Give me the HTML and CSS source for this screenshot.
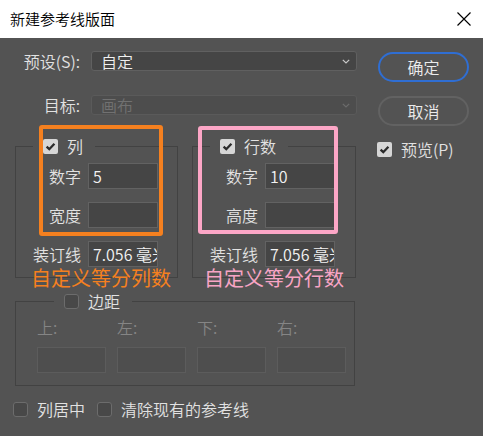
FILE: index.html
```html
<!DOCTYPE html>
<html lang="zh">
<head>
<meta charset="utf-8">
<title>新建参考线版面</title>
<link rel="stylesheet" href="styles.css">
</head>
<body>
<div class="dialog">
  <div class="titlebar">
    <span class="title">新建参考线版面</span>
    <svg class="close" viewBox="0 0 14 14" aria-hidden="true"><path d="M0.5 0.5 L13.5 13.5 M13.5 0.5 L0.5 13.5" stroke="#000" stroke-width="1.15" fill="none"/></svg>
  </div>
  <div class="content">
    <div class="main">
      <div class="field-row">
        <span class="row-label">预设(S):</span>
        <div class="select"><span>自定</span><svg class="chev" viewBox="0 0 8 5"><path d="M0.8 0.8 L4 4 L7.2 0.8" stroke="#c9c9c9" stroke-width="1.2" fill="none"/></svg></div>
      </div>
      <div class="field-row">
        <span class="row-label">目标:</span>
        <div class="select disabled"><span>画布</span><svg class="chev" viewBox="0 0 8 5"><path d="M0.8 0.8 L4 4 L7.2 0.8" stroke="#6c6c6c" stroke-width="1.2" fill="none"/></svg></div>
      </div>

      <div class="groups">
        <fieldset class="group cols">
          <legend><span class="cb checked"><svg viewBox="0 0 15 15"><path d="M3.6 7.6 L6.3 10.2 L11.4 4.8" stroke="#2b2b2b" stroke-width="2.3" fill="none"/></svg></span><span>列</span></legend>
          <div class="group-grid">
            <span class="lbl">数字</span><div class="input">5</div>
            <span class="lbl">宽度</span><div class="input"></div>
            <span class="lbl">装订线</span><div class="input">7.056 毫米</div>
          </div>
        </fieldset>
        <fieldset class="group rows">
          <legend><span class="cb checked"><svg viewBox="0 0 15 15"><path d="M3.6 7.6 L6.3 10.2 L11.4 4.8" stroke="#2b2b2b" stroke-width="2.3" fill="none"/></svg></span><span>行数</span></legend>
          <div class="group-grid">
            <span class="lbl">数字</span><div class="input">10</div>
            <span class="lbl">高度</span><div class="input"></div>
            <span class="lbl">装订线</span><div class="input">7.056 毫米</div>
          </div>
        </fieldset>
        <div class="annot-box orange"></div>
        <div class="annot-box pink"></div>
        <div class="annot-text orange">自定义等分列数</div>
        <div class="annot-text pink">自定义等分行数</div>
      </div>

      <fieldset class="group margins">
        <legend><span class="cb"></span><span>边距</span></legend>
        <div class="margin-grid">
          <span class="mlbl">上:</span><span class="mlbl">左:</span><span class="mlbl">下:</span><span class="mlbl">右:</span>
          <div class="input disabled"></div><div class="input disabled"></div><div class="input disabled"></div><div class="input disabled"></div>
        </div>
      </fieldset>

      <div class="bottom">
        <span class="check-item"><span class="cb"></span><span>列居中</span></span>
        <span class="check-item"><span class="cb"></span><span>清除现有的参考线</span></span>
      </div>
    </div>

    <div class="side">
      <div class="btn primary">确定</div>
      <div class="btn">取消</div>
      <div class="preview"><span class="cb checked"><svg viewBox="0 0 15 15"><path d="M3.6 7.6 L6.3 10.2 L11.4 4.8" stroke="#2b2b2b" stroke-width="2.3" fill="none"/></svg></span><span>预览(P)</span></div>
    </div>
  </div>
</div>
</body>
</html>
```

FILE: styles.css
```css
* { box-sizing: border-box; }
html, body { margin: 0; padding: 0; }
body {
  width: 483px;
  height: 436px;
  overflow: hidden;
  background: #535353;
  font-family: "Noto Sans CJK SC", "Noto Sans", sans-serif;
}
.dialog {
  width: 483px;
  height: 436px;
  display: flex;
  flex-direction: column;
  background: #535353;
  color: #e2e2e2;
  font-size: 16px;
  line-height: 20px;
  font-weight: 350;
}
.titlebar {
  flex: none;
  height: 38px;
  background: #ffffff;
  color: #000;
  display: flex;
  align-items: center;
  justify-content: space-between;
  padding: 0 12px 0 10px;
  font-size: 15px;
}
.close { width: 14px; height: 14px; display: block; }

.content {
  flex: 1;
  display: flex;
  gap: 21px;
  padding: 13px 0 0 13px;
}
.main { width: 344px; display: flex; flex-direction: column; }

.field-row { display: flex; align-items: center; gap: 11px; height: 20px; }
.field-row + .field-row { margin-top: 24px; }
.row-label { width: 67px; text-align: right; white-space: nowrap; }
.select {
  width: 266px;
  height: 20px;
  border: 1px solid #606060;
  border-radius: 3px;
  background: #454545;
  display: flex;
  align-items: center;
  justify-content: space-between;
  padding: 0 6px 0 9px;
  color: #f0f0f0;
  line-height: 18px;
}
.select.disabled { background: #4d4d4d; border-color: #5a5a5a; color: #717171; }
.chev { width: 8px; height: 5px; display: block; }

.groups {
  position: relative;
  display: flex;
  gap: 14px;
  margin: 22px 0 0 2px;
}
fieldset.group {
  margin: 0;
  padding: 8px 0 10px 0;
  border: 1px solid #424242;
  min-width: 0;
}
.group.cols { width: 163px; }
.group.rows { width: 164px; }
legend {
  display: flex;
  align-items: center;
  gap: 9px;
  height: 18px;
  line-height: 18px;
  padding: 0 12px 0 10px;
  margin-left: 17px;
}
.group-grid {
  display: grid;
  grid-template-columns: 65px 70px;
  column-gap: 7px;
  row-gap: 13px;
  align-items: center;
}
.lbl { text-align: right; white-space: nowrap; }
.input {
  height: 26px;
  background: #454545;
  border: 1px solid #626262;
  padding: 0 4px;
  line-height: 24px;
  overflow: hidden;
  white-space: nowrap;
  color: #f2f2f2;
}
.input.disabled { background: #4e4e4e; border-color: #5c5c5c; }

.cb {
  flex: none;
  width: 15px;
  height: 15px;
  border-radius: 3px;
  background: #484848;
  border: 1px solid #6c6c6c;
  display: block;
}
.cb.checked { background: #d6d6d6; border: none; border-radius: 2px; }
.cb svg { width: 15px; height: 15px; display: block; }

.annot-box {
  position: absolute;
  border: 4px solid;
  border-radius: 3px;
  pointer-events: none;
}
.annot-box.orange { left: 24px; top: -12px; width: 124px; height: 111px; border-color: #f5801f; }
.annot-box.pink { left: 183px; top: -11px; width: 140px; height: 108px; border-color: #fca6c6; }
.annot-text {
  position: absolute;
  top: 129px;
  font-size: 20px;
  line-height: 24px;
  font-weight: 400;
  white-space: nowrap;
}
.annot-text.orange { left: 16px; color: #f5801f; }
.annot-text.pink { left: 189px; color: #f8a4c4; }

fieldset.group.margins {
  width: 340px;
  margin: 14px 0 0 2px;
  padding: 7px 0 12px 21px;
}
.margin-grid {
  display: grid;
  grid-template-columns: repeat(4, 69px);
  column-gap: 11px;
  row-gap: 10px;
}
.mlbl { color: #858585; }

.bottom {
  display: flex;
  align-items: center;
  height: 20px;
  margin-top: 13px;
  gap: 12px;
}
.check-item { display: flex; align-items: center; gap: 9px; white-space: nowrap; }

.side { width: 91px; display: flex; flex-direction: column; padding-top: 1px; }
.btn {
  height: 30px;
  border-radius: 15px;
  border: 2px solid #626262;
  display: flex;
  align-items: center;
  justify-content: center;
  color: #ececec;
}
.btn.primary { border-color: #2f6ed3; }
.btn + .btn { margin-top: 14px; }
.preview {
  margin: 13px 0 0 -1px;
  display: flex;
  align-items: center;
  gap: 9px;
  height: 20px;
  white-space: nowrap;
}
```
